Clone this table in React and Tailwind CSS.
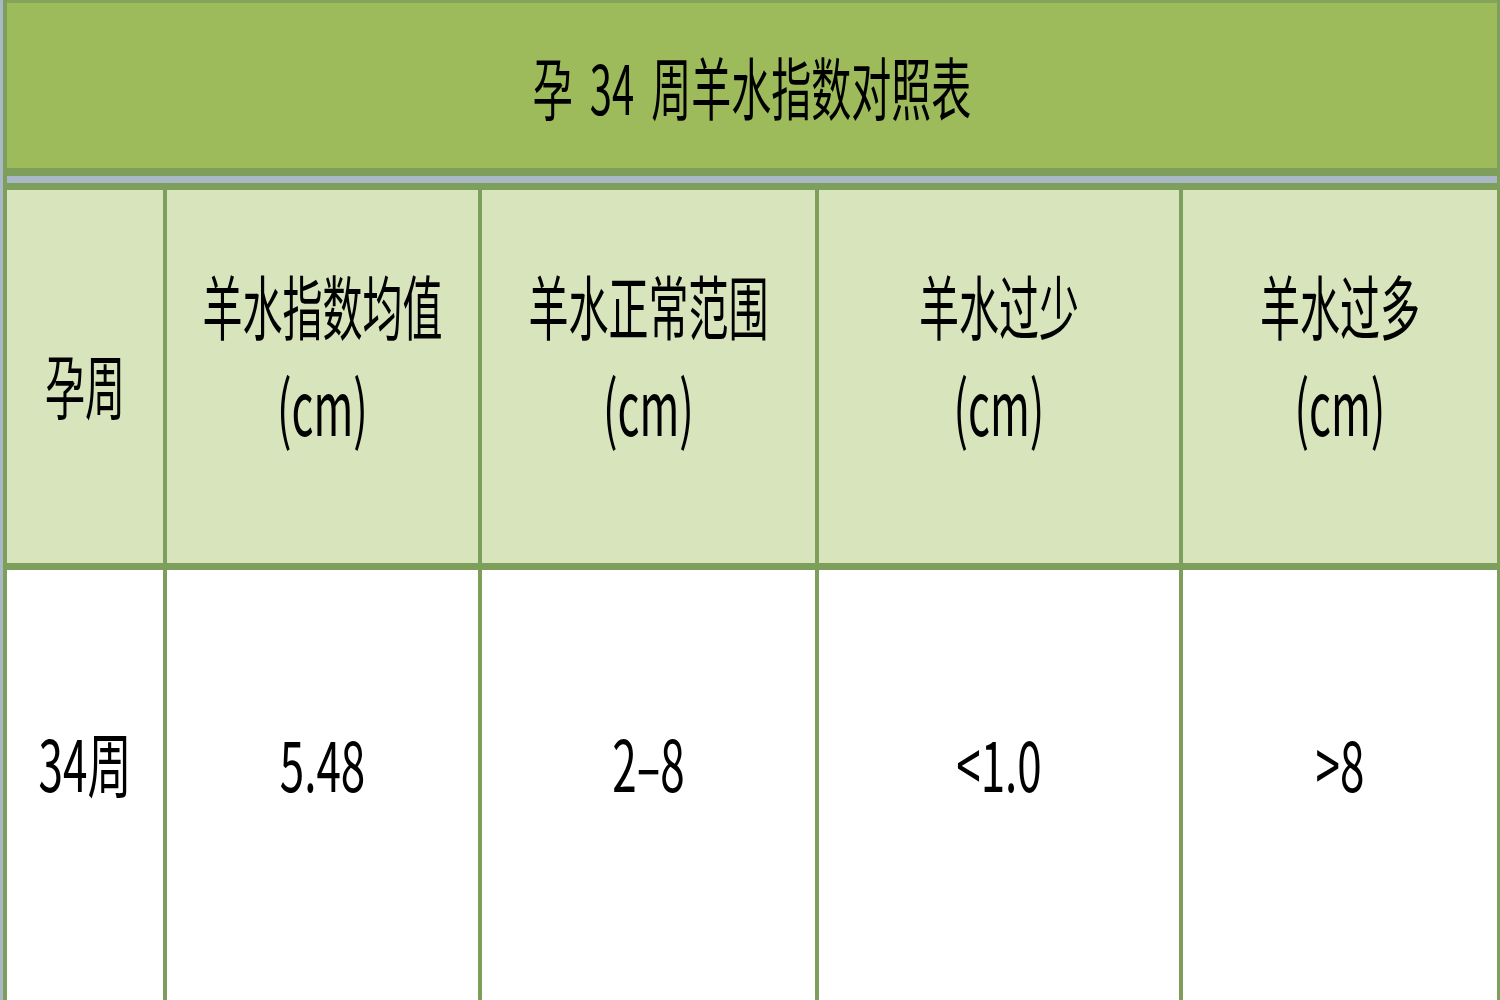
export default function App() {
  const font = { fontFamily: '"Noto Sans CJK SC", "Noto Sans", sans-serif' };
  const cols = [
    { w: 'w-[160px]', head: ['孕周'], val: '34周' },
    { w: 'w-[315px]', head: ['羊水指数均值', '(cm)'], val: '5.48' },
    { w: 'w-[337px]', head: ['羊水正常范围', '(cm)'], val: '2–8' },
    { w: 'w-[364px]', head: ['羊水过少', '(cm)'], val: '<1.0' },
    { w: 'flex-1', head: ['羊水过多', '(cm)'], val: '>8' },
  ];

  return (
    <div className="w-[1500px] h-[1000px] overflow-hidden bg-[#a9b8c7] pl-[3px] text-black" style={font}>
      <div className="h-full flex flex-col border-l-4 border-r-[3px] border-[#7e9f5b] bg-white">
        {/* title band */}
        <div className="h-[168px] shrink-0 bg-[#9dbb5a] border-t-[3px] border-[#84a45c] flex items-center justify-center">
          <span className="inline-block text-[40px] leading-none scale-y-[1.7] whitespace-pre [word-spacing:8px]">
            孕 34 周羊水指数对照表
          </span>
        </div>
        <div className="h-[8px] shrink-0 bg-[#7e9e5c]" />
        <div className="h-[7px] shrink-0 bg-[#a9b8c7]" />
        <div className="h-[7px] shrink-0 bg-[#7e9f5b]" />

        {/* header row */}
        <div className="h-[373px] shrink-0 flex bg-[#d8e4bc]">
          {cols.map((c, i) => (
            <div
              key={i}
              className={`${c.w} shrink-0 flex flex-col items-center justify-center gap-[57px] ${c.head.length === 1 ? 'pt-[14px]' : 'pb-[44px]'} ${i < cols.length - 1 ? 'border-r-4 border-[#7e9f5b]' : ''}`}
            >
              {c.head.map((t, j) => (
                <span
                  key={j}
                  className={`inline-block leading-none scale-y-[1.75] ${j === 1 ? 'text-[43px]' : 'text-[40px]'}`}
                >
                  {t}
                </span>
              ))}
            </div>
          ))}
        </div>
        <div className="h-[7px] shrink-0 bg-[#7e9f5b]" />

        {/* value row */}
        <div className="flex-1 flex bg-white">
          {cols.map((c, i) => (
            <div
              key={i}
              className={`${c.w} shrink-0 flex items-start justify-center pt-[170px] ${i < cols.length - 1 ? 'border-r-4 border-[#7e9f5b]' : ''}`}
            >
              <span className="inline-block text-[44px] leading-none scale-y-[1.6]">{c.val}</span>
            </div>
          ))}
        </div>
      </div>
    </div>
  );
}
